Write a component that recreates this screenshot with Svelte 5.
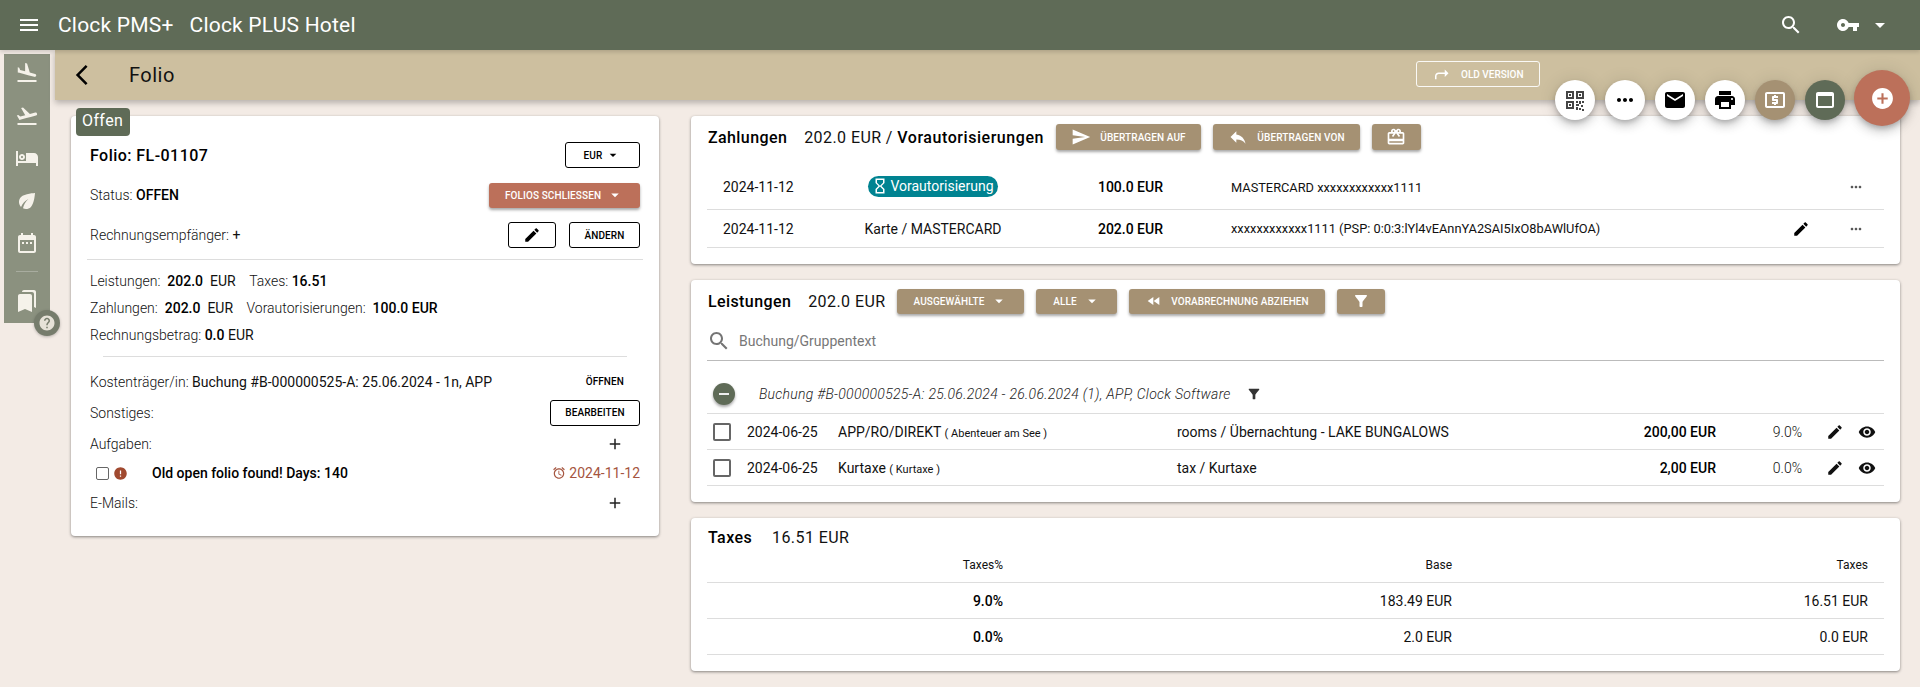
<script>
  const p = {
    menu: 'M3 18h18v-2H3v2zm0-5h18v-2H3v2zm0-7v2h18V6H3z',
    land: 'M2.5 19h19v2h-19zm7.18-5.73l4.35 1.16 5.31 1.42c.8.21 1.62-.26 1.84-1.06.21-.8-.26-1.62-1.06-1.84l-5.31-1.42-2.76-9.02L10.12 2v8.28L5.15 8.95l-.93-2.32-1.45-.39v5.17l1.6.43 5.31 1.43z',
    takeoff: 'M2.5 19h19v2h-19zm19.57-9.36c-.21-.8-1.04-1.28-1.84-1.06L14.92 10l-6.9-6.43-1.93.51 4.14 7.17-4.97 1.33-1.97-1.54-1.45.39 1.82 3.16.77 1.33 1.6-.43 5.31-1.42 4.35-1.16L21 11.49c.81-.23 1.28-1.05 1.07-1.85z',
    hotel: 'M7 14c1.66 0 3-1.34 3-3S8.66 8 7 8s-3 1.34-3 3 1.34 3 3 3zm0-4c.55 0 1 .45 1 1s-.45 1-1 1-1-.45-1-1 .45-1 1-1zm12-3h-8v8H3V5H1v15h2v-3h18v3h2v-9c0-2.21-1.79-4-4-4z',
    eco: 'M6.05 8.05c-2.73 2.73-2.73 7.15-.02 9.88 1.47-3.4 4.09-6.24 7.36-7.93-2.77 2.34-4.71 5.61-5.39 9.32 2.6 1.23 5.8.78 7.95-1.37C19.43 14.47 20 4 20 4S9.53 4.57 6.05 8.05z',
    cal: 'M19 4h-1V2h-2v2H8V2H6v2H5c-1.1 0-2 .9-2 2v14c0 1.1.9 2 2 2h14c1.1 0 2-.9 2-2V6c0-1.1-.9-2-2-2zm0 16H5V9h14v11zM7 11h2v2H7zm4 0h2v2h-2zm4 0h2v2h-2z',
    bookmarks: 'M19 18l2 1V3c0-1.1-.9-2-2-2H8.99C7.89 1 7 1.9 7 3h10c1.1 0 2 .9 2 2v13zM15 5H5c-1.1 0-2 .9-2 2v16l7-3 7 3V7c0-1.1-.9-2-2-2z',
    edit: 'M3 17.25V21h3.75L17.81 9.94l-3.75-3.75L3 17.25zM20.71 7.04c.39-.39.39-1.02 0-1.41l-2.34-2.34c-.39-.39-1.02-.39-1.41 0l-1.83 1.83 3.75 3.75 1.83-1.83z',
    search: 'M15.5 14h-.79l-.28-.27C15.41 12.59 16 11.11 16 9.5 16 5.91 13.09 3 9.5 3S3 5.91 3 9.5 5.91 16 9.5 16c1.61 0 3.09-.59 4.23-1.57l.27.28v.79l5 4.99L20.49 19l-4.99-5zm-6 0C7.01 14 5 11.99 5 9.5S7.01 5 9.5 5 14 7.01 14 9.5 11.99 14 9.5 14z',
    key: 'M12.65 10C11.83 7.67 9.61 6 7 6c-3.31 0-6 2.69-6 6s2.69 6 6 6c2.61 0 4.83-1.67 5.65-4H17v4h4v-4h2v-4H12.65zM7 14c-1.1 0-2-.9-2-2s.9-2 2-2 2 .9 2 2-.9 2-2 2z',
    caret: 'M7 10l5 5 5-5z',
    send: 'M2.01 21L23 12 2.01 3 2 10l15 2-15 2z',
    reply: 'M10 9V5l-7 7 7 7v-4.1c5 0 8.5 1.6 11 5.1-1-5-4-10-11-11z',
    gift: 'M20 6h-2.18c.11-.31.18-.65.18-1 0-1.66-1.34-3-3-3-1.05 0-1.96.54-2.5 1.35l-.5.67-.5-.68C10.96 2.54 10.05 2 9 2 7.34 2 6 3.34 6 5c0 .35.07.69.18 1H4c-1.11 0-1.99.89-1.99 2L2 19c0 1.11.89 2 2 2h16c1.11 0 2-.89 2-2V8c0-1.11-.89-2-2-2zm-5-2c.55 0 1 .45 1 1s-.45 1-1 1-1-.45-1-1 .45-1 1-1zM9 4c.55 0 1 .45 1 1s-.45 1-1 1-1-.45-1-1 .45-1 1-1zm11 15H4v-2h16v2zm0-5H4V8h5.08L7 10.83 8.62 12 11 8.76l1-1.36 1 1.36L15.38 12 17 10.83 14.92 8H20v6z',
    more: 'M6 10c-1.1 0-2 .9-2 2s.9 2 2 2 2-.9 2-2-.9-2-2-2zm12 0c-1.1 0-2 .9-2 2s.9 2 2 2 2-.9 2-2-.9-2-2-2zm-6 0c-1.1 0-2 .9-2 2s.9 2 2 2 2-.9 2-2-.9-2-2-2z',
    mail: 'M20 4H4c-1.1 0-1.99.9-1.99 2L2 18c0 1.1.9 2 2 2h16c1.1 0 2-.9 2-2V6c0-1.1-.9-2-2-2zm0 4l-8 5-8-5V6l8 5 8-5v2z',
    print: 'M19 8H5c-1.66 0-3 1.34-3 3v6h4v4h12v-4h4v-6c0-1.66-1.34-3-3-3zm-3 11H8v-5h8v5zm3-7c-.55 0-1-.45-1-1s.45-1 1-1 1 .45 1 1-.45 1-1 1zm-1-9H6v4h12V3z',
    atm: 'M11 17h2v-1h1c.55 0 1-.45 1-1v-3c0-.55-.45-1-1-1h-3v-1h4V8h-2V7h-2v1h-1c-.55 0-1 .45-1 1v3c0 .55.45 1 1 1h3v1H9v2h2v1zm9-13H4c-1.11 0-1.99.89-1.99 2L2 18c0 1.11.89 2 2 2h16c1.11 0 2-.89 2-2V6c0-1.11-.89-2-2-2zm0 14H4V6h16v12z',
    web: 'M19 4H5c-1.11 0-2 .9-2 2v12c0 1.1.89 2 2 2h14c1.1 0 2-.9 2-2V6c0-1.1-.89-2-2-2zm0 14H5V8h14v10z',
    addc: 'M12 2C6.48 2 2 6.48 2 12s4.48 10 10 10 10-4.48 10-10S17.52 2 12 2zm5 11h-4v4h-2v-4H7v-2h4V7h2v4h4v2z',
    filter: 'M4.25 5.61C6.27 8.2 10 13 10 13v6c0 .55.45 1 1 1h2c.55 0 1-.45 1-1v-6s3.72-4.8 5.74-7.39c.51-.66.04-1.61-.79-1.61H5.04c-.83 0-1.3.95-.79 1.61z',
    eye: 'M12 4.5C7 4.5 2.73 7.61 1 12c1.73 4.39 6 7.5 11 7.5s9.27-3.11 11-7.5c-1.73-4.39-6-7.5-11-7.5zM12 17c-2.76 0-5-2.24-5-5s2.24-5 5-5 5 2.24 5 5-2.24 5-5 5zm0-8c-1.66 0-3 1.34-3 3s1.34 3 3 3 3-1.34 3-3-1.34-3-3-3z',
    rewind: 'M11 18V6l-8.5 6 8.5 6zm.5-6l8.5 6V6l-8.5 6z',
    hourglass: 'M6 2v6h.01L6 8.01 10 12l-4 4 .01.01H6V22h12v-5.99h-.01L18 16l-4-4 4-3.99-.01-.01H18V2H6zm10 14.5V20H8v-3.5l4-4 4 4zm-4-5l-4-4V4h8v3.5l-4 4z',
    back: 'M17.51 3.87L15.73 2.1 5.84 12l9.9 9.9 1.77-1.77L9.38 12l8.13-8.13z',
    turn: 'M4 19h2v-4c0-1.7 1.3-3 3-3h8v4l5-5-5-5v4H9c-2.8 0-5 2.2-5 5z',
    alarm: 'M22 5.72l-4.6-3.86-1.29 1.53 4.6 3.86L22 5.72zM7.88 3.39L6.6 1.86 2 5.71l1.29 1.53 4.59-3.85zM12.5 8H11v6l4.75 2.85.75-1.23-4-2.37V8zM12 4c-4.97 0-9 4.03-9 9s4.02 9 9 9c4.97 0 9-4.03 9-9s-4.03-9-9-9zm0 16c-3.87 0-7-3.13-7-7s3.13-7 7-7 7 3.13 7 7-3.13 7-7 7z',
    error: 'M12 2C6.48 2 2 6.48 2 12s4.48 10 10 10 10-4.48 10-10S17.52 2 12 2zm1 15h-2v-2h2v2zm0-4h-2V7h2v6z',
    help: 'M12 2C6.48 2 2 6.48 2 12s4.48 10 10 10 10-4.48 10-10S17.52 2 12 2zm1 17h-2v-2h2v2zm2.07-7.75l-.9.92C13.45 12.9 13 13.5 13 15h-2v-.5c0-1.1.45-2.1 1.17-2.83l1.24-1.26c.37-.36.59-.86.59-1.41 0-1.1-.9-2-2-2s-2 .9-2 2H8c0-2.21 1.79-4 4-4s4 1.79 4 4c0 .88-.36 1.68-.93 2.25z',
    plus: 'M19 13h-6v6h-2v-6H5v-2h6V5h2v6h6v2z',
    qr: 'M3 3h8v8H3zm2 2v4h4V5zm1 1h2v2H6zm7-3h8v8h-8zm2 2v4h4V5zm1 1h2v2h-2zM3 13h8v8H3zm2 2v4h4v-4zm1 1h2v2H6zm7-3h2v2h-2zm3 0h2v3h-2zm3 0h2v2h-2zm-6 3h3v2h-3zm5 1h2v2h-2zm-5 2h2v3h-2zm3 1h2v2h-2zm3 1h2v2h-2z'
  };
  const rail = ['land', 'takeoff', 'hotel', 'eco', 'cal'];
  const fabs = [
    { i: 'qr', c: 'f-white', s: 24, tone: '#444' },
    { i: 'more', c: 'f-white', s: 24 },
    { i: 'mail', c: 'f-white', s: 24 },
    { i: 'print', c: 'f-white', s: 24 },
    { i: 'atm', c: 'f-sand', s: 24 },
    { i: 'web', c: 'f-olive', s: 24 }
  ];
  const payments = [
    { date: '2024-11-12', badge: true, amt: '100.0 EUR', ref: 'MASTERCARD xxxxxxxxxxxx1111', edit: false },
    { date: '2024-11-12', method: 'Karte / MASTERCARD', amt: '202.0 EUR', ref: 'xxxxxxxxxxxx1111 (PSP: 0:0:3:lYl4vEAnnYA2SAI5IxO8bAWlUfOA)', edit: true }
  ];
  const services = [
    { name: 'APP/RO/DIREKT', sub: 'Abenteuer am See', desc: 'rooms / Übernachtung - LAKE BUNGALOWS', amt: '200,00 EUR', pct: '9.0%' },
    { name: 'Kurtaxe', sub: 'Kurtaxe', desc: 'tax / Kurtaxe', amt: '2,00 EUR', pct: '0.0%' }
  ];
  const taxes = [
    ['9.0%', '183.49 EUR', '16.51 EUR'],
    ['0.0%', '2.0 EUR', '0.0 EUR']
  ];
</script>

{#snippet ic(name, size = 24, fill = 'currentColor')}
  <svg class="ic" width={size} height={size} viewBox="0 0 24 24" fill={fill} fill-rule="evenodd" aria-hidden="true"><path d={p[name]} /></svg>
{/snippet}

<div class="page">
  <header class="topbar">
    <span class="burger">{@render ic('menu', 24)}</span>
    <span class="brand">Clock PMS+</span>
    <span class="brand hotel">Clock PLUS Hotel</span>
    <span class="top-search">{@render ic('search', 24)}</span>
    <span class="top-key">{@render ic('key', 24)}</span>
    <span class="top-caret">{@render ic('caret', 24)}</span>
  </header>

  <div class="fabs">
    {#each fabs as f}
      <span class="fab {f.c}">{@render ic(f.i, f.s, f.tone ?? 'currentColor')}</span>
    {/each}
    <span class="fab big">{@render ic('addc', 25)}</span>
  </div>

  <div class="shell">
    <div class="rail-col">
      <nav class="rail">
        {#each rail as r}
          {@render ic(r, 24)}
        {/each}
        <span class="rail-div"></span>
        <span class="rail-book">{@render ic('bookmarks', 24)}</span>
        <span class="help">{@render ic('help', 18)}</span>
      </nav>
    </div>

    <div class="main">
      <div class="subbar">
        <span class="back">{@render ic('back', 24)}</span>
        <span class="sub-title">Folio</span>
        <span class="old">{@render ic('turn', 18)}<span>OLD VERSION</span></span>
      </div>

      <div class="cols">
        <section class="card left">
          <span class="tag">Offen</span>
          <div class="lrow r40">
            <strong class="folio">Folio: FL-01107</strong>
            <button class="btn outline eur">EUR {@render ic('caret', 16)}</button>
          </div>
          <div class="lrow r40">
            <span><span class="lbl">Status:</span> <b>OFFEN</b></span>
            <button class="btn rust close">FOLIOS SCHLIESSEN {@render ic('caret', 18)}</button>
          </div>
          <div class="lrow r40">
            <span><span class="lbl">Rechnungsempfänger:</span> +</span>
            <span class="btns">
              <button class="btn outline pen">{@render ic('edit', 18)}</button>
              <button class="btn outline change">ÄNDERN</button>
            </span>
          </div>
          <hr class="div-a" />
          <div class="stats">
            <div class="stat"><span class="lbl">Leistungen:</span>&nbsp; <b>202.0</b>&nbsp; <span class="lbl2">EUR</span>&nbsp;&nbsp; <span class="lbl gap">Taxes:</span> <b>16.51</b></div>
            <div class="stat"><span class="lbl">Zahlungen:</span>&nbsp; <b>202.0</b>&nbsp; <span class="lbl2">EUR</span>&nbsp;&nbsp; <span class="lbl gap">Vorautorisierungen:</span>&nbsp; <b>100.0 EUR</b></div>
            <div class="stat"><span class="lbl">Rechnungsbetrag:</span> <b>0.0</b> <span class="lbl2">EUR</span></div>
          </div>
          <hr class="div-b" />
          <div class="lrow r31">
            <span><span class="lbl">Kostenträger/in:</span> Buchung #B-000000525-A: 25.06.2024 - 1n, APP</span>
            <button class="btn flat">ÖFFNEN</button>
          </div>
          <div class="lrow r31">
            <span class="lbl">Sonstiges:</span>
            <button class="btn outline edit-btn">BEARBEITEN</button>
          </div>
          <div class="lrow r32">
            <span class="lbl">Aufgaben:</span>
            <span class="plus">{@render ic('plus', 18)}</span>
          </div>
          <div class="task">
            <span class="check small"></span>
            <span class="err">{@render ic('error', 15)}</span>
            <b class="task-text">Old open folio found! Days: 140</b>
            <span class="due">{@render ic('alarm', 14)}<span>2024-11-12</span></span>
          </div>
          <div class="lrow r34">
            <span class="lbl">E-Mails:</span>
            <span class="plus">{@render ic('plus', 18)}</span>
          </div>
        </section>

        <div class="right">
          <section class="card pay">
            <div class="head">
              <strong class="h">Zahlungen</strong>
              <span class="v">202.0 EUR / <strong class="h">Vorautorisierungen</strong></span>
              <button class="btn sand b-to">{@render ic('send', 20)}ÜBERTRAGEN AUF</button>
              <button class="btn sand b-from">{@render ic('reply', 20)}ÜBERTRAGEN VON</button>
              <button class="btn sand b-gift">{@render ic('gift', 20)}</button>
            </div>
            <div class="pay-rows">
              {#each payments as r, i}
                <div class="pay-row" class:first={i === 0}>
                  <span class="p-date">{r.date}</span>
                  <span class="p-method">
                    {#if r.badge}
                      <span class="badge">{@render ic('hourglass', 18)}Vorautorisierung</span>
                    {:else}
                      {r.method}
                    {/if}
                  </span>
                  <b class="p-amt">{r.amt}</b>
                  <span class="p-ref">{r.ref}</span>
                  <span class="p-edit">{#if r.edit}{@render ic('edit', 18)}{/if}</span>
                  <span class="p-more">{@render ic('more', 16, '#555')}</span>
                </div>
              {/each}
            </div>
          </section>

          <section class="card serv">
            <div class="head">
              <strong class="h">Leistungen</strong>
              <span class="v">202.0 EUR</span>
              <button class="btn sand b-sel">AUSGEWÄHLTE {@render ic('caret', 18)}</button>
              <button class="btn sand b-all">ALLE {@render ic('caret', 18)}</button>
              <button class="btn sand b-pre">{@render ic('rewind', 16)}VORABRECHNUNG ABZIEHEN</button>
              <button class="btn sand b-fil">{@render ic('filter', 18)}</button>
            </div>
            <div class="searchrow">
              {@render ic('search', 24, '#757575')}
              <span>Buchung/Gruppentext</span>
            </div>
            <div class="group">
              <span class="minus"><i></i></span>
              <em>Buchung #B-000000525-A: 25.06.2024 - 26.06.2024 (1), APP, Clock Software</em>
              <span class="g-filter">{@render ic('filter', 16, '#333')}</span>
            </div>
            {#each services as s}
              <div class="serv-row">
                <span class="cell-check"><span class="check"></span></span>
                <span>2024-06-25</span>
                <span>{s.name} <small>( {s.sub} )</small></span>
                <span>{s.desc}</span>
                <b class="s-amt">{s.amt}</b>
                <span class="s-pct">{s.pct}</span>
                <span class="s-pen">{@render ic('edit', 18)}</span>
                <span class="s-eye">{@render ic('eye', 18)}</span>
              </div>
            {/each}
          </section>

          <section class="card tax">
            <div class="head tax-head">
              <strong class="h">Taxes</strong>
              <span class="v tv">16.51 EUR</span>
            </div>
            <div class="tax-row th">
              <span>Taxes%</span><span>Base</span><span>Taxes</span>
            </div>
            {#each taxes as t}
              <div class="tax-row">
                <b>{t[0]}</b><span>{t[1]}</span><span>{t[2]}</span>
              </div>
            {/each}
          </section>
        </div>
      </div>
    </div>
  </div>
</div>

<style>
  :global(body) {
    margin: 0;
    background: #f3ebe5;
  }
  .page {
    position: relative;
    height: 687px;
    overflow: hidden;
    background: #f3ebe5;
    font-family: Roboto, "Liberation Sans", sans-serif;
    font-size: 14px;
    color: #111;
  }
  .ic {
    display: block;
    flex: none;
  }
  b, strong {
    font-weight: 500;
    color: #000;
  }
  button {
    font-family: inherit;
    cursor: pointer;
  }

  .topbar {
    height: 50px;
    background: #5f6b57;
    color: #fff;
    display: flex;
    align-items: center;
    position: relative;
    z-index: 3;
    box-shadow: 0 2px 4px rgba(0, 0, 0, 0.15);
  }
  .burger { margin-left: 17px; }
  .brand {
    font-size: 21px;
    font-weight: 400;
    margin-left: 17px;
    letter-spacing: 0.2px;
  }
  .hotel { margin-left: 16px; }
  .top-search { margin-left: auto; margin-right: 33px; }
  .top-key { margin-right: 8px; }
  .top-caret { margin-right: 28px; }

  .fabs {
    position: absolute;
    top: 70px;
    right: 10px;
    z-index: 4;
    display: flex;
    gap: 10px;
    align-items: flex-start;
  }
  .fab {
    width: 40px;
    height: 40px;
    margin-top: 10px;
    border-radius: 50%;
    display: flex;
    align-items: center;
    justify-content: center;
    box-shadow: 0 3px 5px -1px rgba(0, 0, 0, 0.2), 0 6px 10px rgba(0, 0, 0, 0.14), 0 1px 18px rgba(0, 0, 0, 0.12);
  }
  .f-white { background: #fff; color: #000; }
  .f-sand { background: #a59173; color: #fff; }
  .f-olive { background: #5f6b57; color: #fff; }
  .fab.big {
    width: 56px;
    height: 56px;
    margin: 0 0 0 -1px;
    background: #bc705a;
    color: #fff;
  }

  .shell { display: flex; }
  .rail-col {
    width: 55px;
    flex: none;
    padding: 4px 5px 0 4px;
    box-sizing: border-box;
  }
  .rail {
    position: relative;
    background: #8b917f;
    color: #f5f2ea;
    display: flex;
    flex-direction: column;
    align-items: center;
    gap: 18.5px;
    padding: 7px 0 9px;
    box-sizing: border-box;
    height: 269px;
  }
  .rail-div {
    width: 22px;
    height: 1px;
    background: rgba(255, 255, 255, 0.25);
    margin-top: -2.5px;
  }
  .rail-book { margin-top: -2px; }
  .help {
    position: absolute;
    left: 30px;
    bottom: -13px;
    width: 26px;
    height: 26px;
    border-radius: 50%;
    background: #767c6c;
    color: #e6e2d8;
    display: flex;
    align-items: center;
    justify-content: center;
    box-shadow: 0 1px 3px rgba(0, 0, 0, 0.25);
  }

  .main { flex: 1; min-width: 0; }
  .subbar {
    height: 50px;
    background: #cdbf9f;
    display: flex;
    align-items: center;
    box-shadow: 0 3px 6px rgba(0, 0, 0, 0.25);
    position: relative;
    z-index: 1;
  }
  .back { margin-left: 15px; color: #000; }
  .sub-title {
    margin-left: 35px;
    font-size: 20px;
    letter-spacing: 0.5px;
    color: #111;
  }
  .old {
    margin-left: auto;
    margin-right: 380px;
    margin-top: -2px;
    width: 124px;
    height: 26px;
    box-sizing: border-box;
    border: 1px solid rgba(255, 255, 255, 0.9);
    border-radius: 3px;
    color: #fff;
    font-size: 10px;
    font-weight: 500;
    display: flex;
    align-items: center;
    padding-left: 15px;
    gap: 11px;
  }

  .cols {
    display: flex;
    gap: 32px;
    padding: 16px 20px 0 16px;
  }
  .card {
    background: #fff;
    border-radius: 4px;
    box-shadow: 0 1px 3px rgba(0, 0, 0, 0.45);
    box-sizing: border-box;
    position: relative;
  }
  .left {
    width: 588px;
    height: 420px;
    padding: 19px 19px 0;
    flex: none;
  }
  .tag {
    position: absolute;
    left: 5px;
    top: -8px;
    width: 54px;
    height: 28px;
    box-sizing: border-box;
    padding-left: 6px;
    background: #5f6b57;
    color: #fff;
    font-size: 16px;
    letter-spacing: 0.4px;
    line-height: 26px;
    border-radius: 4px;
  }
  .lrow {
    display: flex;
    align-items: center;
    justify-content: space-between;
  }
  .r40 { height: 40px; }
  .r31 { height: 31px; }
  .r32 { height: 32px; }
  .r34 { height: 34px; }
  .folio { font-size: 16px; letter-spacing: 0.45px; }
  .lbl { font-weight: 300; }
  .lbl2 { font-weight: 400; }
  .gap { margin-left: 3px; }
  .btn {
    font-size: 10px;
    font-weight: 500;
    border-radius: 3px;
    display: inline-flex;
    align-items: center;
    justify-content: center;
    box-sizing: border-box;
    padding: 0;
    height: 26px;
    color: #000;
    background: transparent;
    border: none;
    letter-spacing: 0.1px;
  }
  .outline { border: 1px solid #000; }
  .eur { width: 75px; gap: 3px; }
  .rust {
    background: #bc705a;
    color: #fff;
    box-shadow: 0 2px 3px rgba(0, 0, 0, 0.35);
    width: 151px;
    height: 25px;
    gap: 5px;
  }
  .btns { display: flex; gap: 13px; }
  .pen { width: 48px; }
  .change { width: 71px; }
  .div-a {
    border: none;
    height: 1px;
    background: #ddd;
    margin: 4px -3px 8px -3px;
  }
  .stat { height: 27px; line-height: 27px; }
  .div-b {
    border: none;
    height: 1px;
    background: #ddd;
    margin: 7px 13px 9px 13px;
  }
  .flat { margin-right: 16px; }
  .edit-btn { width: 90px; }
  .plus { margin-right: 16px; color: #222; }
  .task {
    height: 26px;
    display: flex;
    align-items: center;
    padding-left: 6px;
  }
  .check {
    display: block;
    width: 18px;
    height: 18px;
    border: 2px solid #666;
    border-radius: 2px;
    box-sizing: border-box;
  }
  .check.small { width: 13px; height: 13px; border-width: 1.5px; }
  .err { color: #a0492f; margin-left: 4px; }
  .task-text { margin-left: 24px; }
  .due {
    margin-left: auto;
    display: flex;
    align-items: center;
    gap: 3px;
    color: #a5553f;
  }

  .right {
    width: 1209px;
    flex: none;
    display: flex;
    flex-direction: column;
    gap: 16px;
  }
  .pay { height: 148px; }
  .serv { height: 222px; }
  .tax { height: 153px; }
  .head {
    display: flex;
    align-items: center;
    height: 26px;
    padding: 8px 0 0 17px;
  }
  .h {
    font-size: 16px;
    letter-spacing: 0.4px;
  }
  .v {
    font-size: 16px;
    margin-left: 17px;
    margin-right: 12px;
    white-space: nowrap;
    font-weight: 400;
    letter-spacing: 0.42px;
  }
  .v .h { letter-spacing: 0.55px; }
  .sand {
    background: #a59173;
    color: #fff;
    box-shadow: 0 2px 3px rgba(0, 0, 0, 0.35);
    margin-right: 12px;
  }
  .b-to { width: 145px; gap: 9px; }
  .b-from { width: 147px; gap: 9px; }
  .b-gift { width: 49px; }
  .b-sel { width: 127px; gap: 6px; height: 25px; }
  .b-all { width: 81px; gap: 6px; height: 25px; }
  .b-pre { width: 196px; gap: 9px; height: 25px; }
  .b-fil { width: 48px; height: 25px; }

  .pay-rows { margin: 15px 16px 0; }
  .pay-row {
    display: grid;
    grid-template-columns: 16px 120px 180px 140px 626px 24px 31px 24px 16px;
    align-items: center;
    height: 38px;
    box-sizing: border-box;
    border-bottom: 1px solid #ddd;
  }
  .pay-row.first { height: 45px; }
  .p-date { grid-column: 2; }
  .p-method { grid-column: 3; text-align: center; }
  .p-amt { grid-column: 4; text-align: right; }
  .p-ref { grid-column: 5; padding-left: 68px; font-size: 12.8px; }
  .p-edit { grid-column: 6; display: flex; justify-content: center; color: #000; }
  .p-more { grid-column: 8; display: flex; justify-content: center; }
  .badge {
    display: inline-flex;
    align-items: center;
    height: 21px;
    padding: 0 4px 0 3px;
    gap: 1px;
    border-radius: 11px;
    background: #008391;
    color: #fff;
  }

  .searchrow {
    margin: 7px 16px 0;
    height: 39px;
    display: flex;
    align-items: center;
    gap: 8px;
    border-bottom: 1px solid #bbb;
    color: #777;
  }
  .group {
    margin: 0 16px;
    height: 53px;
    box-sizing: border-box;
    padding-top: 14px;
    display: flex;
    align-items: center;
    border-bottom: 1px solid #ddd;
    color: #444;
  }
  .group em {
    margin-left: 24px;
    font-weight: 300;
    font-style: italic;
    color: #222;
    letter-spacing: 0.28px;
  }
  .minus {
    margin-left: 6px;
    width: 22px;
    height: 22px;
    border-radius: 50%;
    background: #5f6b57;
    display: flex;
    align-items: center;
    justify-content: center;
    box-shadow: 0 2px 3px rgba(0, 0, 0, 0.35);
  }
  .minus i {
    display: block;
    width: 10px;
    height: 2px;
    background: #eee;
  }
  .g-filter { margin-left: 15px; }
  .serv-row {
    margin: 0 16px;
    display: grid;
    grid-template-columns: 40px 91px 339px 350px 189px 86px 21px 24px 8px 24px 5px;
    align-items: center;
    height: 36px;
    box-sizing: border-box;
    border-bottom: 1px solid #ddd;
    white-space: nowrap;
  }
  .serv-row small { font-size: 11px; }
  .cell-check { padding-left: 6px; }
  .s-amt { text-align: right; }
  .s-pct { text-align: right; font-weight: 300; }
  .s-pen { grid-column: 8; display: flex; justify-content: center; }
  .s-eye { grid-column: 10; display: flex; justify-content: center; }

  .tax-head { height: 22px; }
  .tv { margin-left: 20px; }
  .tax-row {
    margin: 0 16px;
    display: grid;
    grid-template-columns: 296px 449px 416px 16px;
    align-items: center;
    height: 36px;
    box-sizing: border-box;
    border-bottom: 1px solid #ddd;
    text-align: right;
  }
  .tax-row.th { height: 35px; font-size: 12px; }
</style>
